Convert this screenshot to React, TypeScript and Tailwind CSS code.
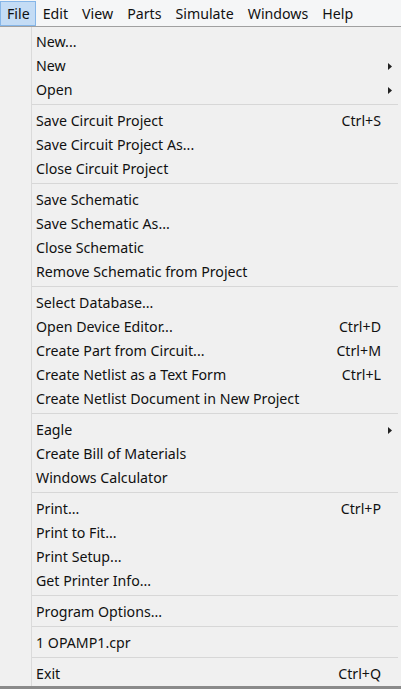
const menus = ["File", "Edit", "View", "Parts", "Simulate", "Windows", "Help"];

type Item = { label: string; shortcut?: string; sub?: boolean } | "sep";

const items: Item[] = [
  { label: "New..." },
  { label: "New", sub: true },
  { label: "Open", sub: true },
  "sep",
  { label: "Save Circuit Project", shortcut: "Ctrl+S" },
  { label: "Save Circuit Project As..." },
  { label: "Close Circuit Project" },
  "sep",
  { label: "Save Schematic" },
  { label: "Save Schematic As..." },
  { label: "Close Schematic" },
  { label: "Remove Schematic from Project" },
  "sep",
  { label: "Select Database..." },
  { label: "Open Device Editor...", shortcut: "Ctrl+D" },
  { label: "Create Part from Circuit...", shortcut: "Ctrl+M" },
  { label: "Create Netlist as a Text Form", shortcut: "Ctrl+L" },
  { label: "Create Netlist Document in New Project" },
  "sep",
  { label: "Eagle", sub: true },
  { label: "Create Bill of Materials" },
  { label: "Windows Calculator" },
  "sep",
  { label: "Print...", shortcut: "Ctrl+P" },
  { label: "Print to Fit..." },
  { label: "Print Setup..." },
  { label: "Get Printer Info..." },
  "sep",
  { label: "Program Options..." },
  "sep",
  { label: "1 OPAMP1.cpr" },
  "sep",
  { label: "Exit", shortcut: "Ctrl+Q" },
];

export default function App() {
  return (
    <div
      className="w-[401px] h-[689px] flex flex-col bg-[#f0f0f0] text-[#111] text-[14.2px] overflow-hidden"
      style={{ fontFamily: '"Noto Sans", "Open Sans", sans-serif' }}
    >
      {/* Menu bar */}
      <div className="h-[27px] flex items-start pt-[1px] bg-[#f5f6f7] border-b border-[#a0a0a0] shrink-0">
        {menus.map((m, i) => (
          <div
            key={m}
            className={
              i === 0
                ? "h-[25px] flex items-center pl-[6px] pr-[5px] bg-[#c4dcf5] border border-[#86b6e8]"
                : "h-[25px] flex items-center px-[6px] border border-transparent"
            }
          >
            {m}
          </div>
        ))}
      </div>

      {/* Dropdown */}
      <div className="flex-1 flex min-h-0">
        <div className="w-[31px] shrink-0" />
        <div className="flex-1 flex flex-col pt-[3px] border-l border-[#dadada] min-w-0">
          {items.map((it, i) =>
            it === "sep" ? (
              <div key={i} className="h-[7px] flex items-center pr-[3px]">
                <div className="w-full h-px bg-[#d7d7d7] mt-[-2px]" />
              </div>
            ) : (
              <div key={i} className="h-[24px] flex items-center pl-[4px] pr-[20px] whitespace-nowrap">
                <span className="flex-1">{it.label}</span>
                {it.shortcut && <span>{it.shortcut}</span>}
                {it.sub && (
                  <svg width="4" height="7" viewBox="0 0 4 7" className="mr-[-11px]">
                    <path d="M0 0 L4 3.5 L0 7 Z" fill="#222" />
                  </svg>
                )}
              </div>
            )
          )}
        </div>
      </div>
      <div className="h-[3px] bg-[#8a8a8a] shrink-0" />
    </div>
  );
}
